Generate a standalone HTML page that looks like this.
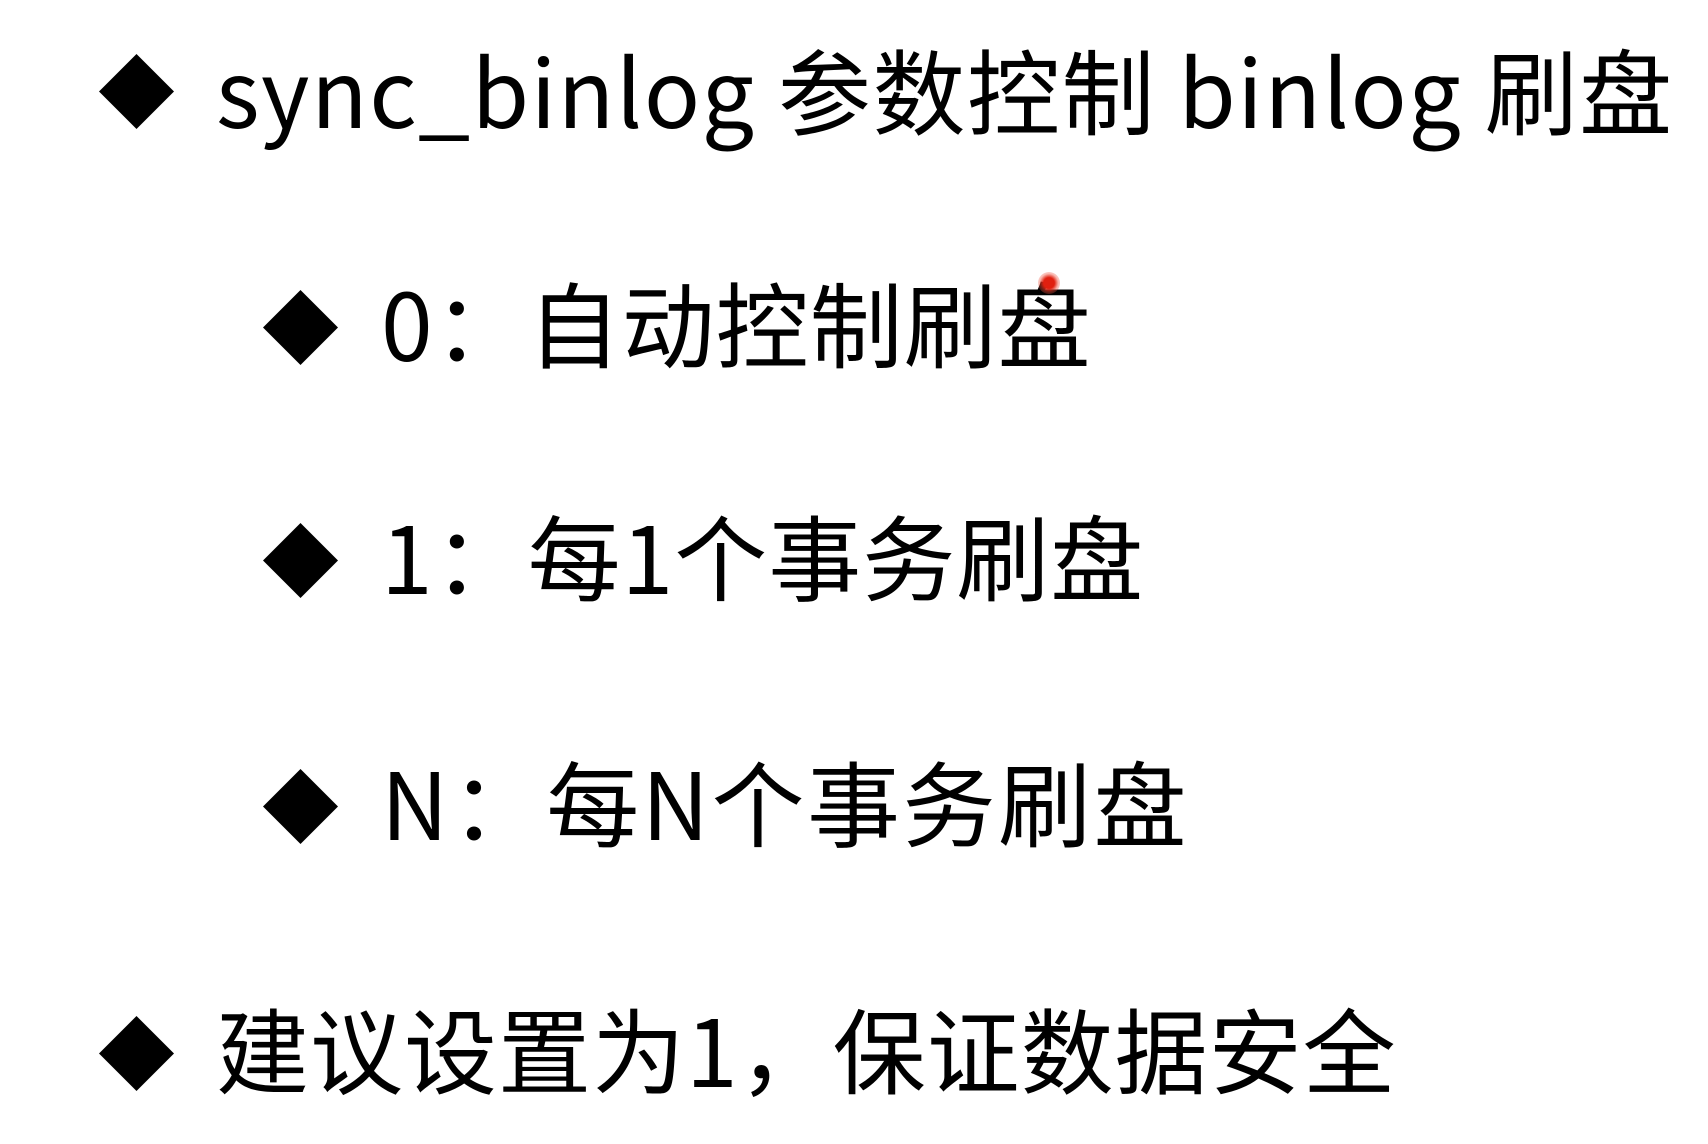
<!DOCTYPE html>
<html><head><meta charset="utf-8"><style>
html,body{margin:0;padding:0;background:#fff;}
body{width:1708px;height:1144px;position:relative;overflow:hidden;font-family:"Noto Sans CJK SC","Liberation Sans",sans-serif;color:#000;}
.l{position:absolute;font-size:93px;line-height:93px;white-space:nowrap;letter-spacing:1px;}
.d{position:absolute;width:75px;height:75px;}
</style></head><body>
<svg class="d" style="left:99px;top:54px" viewBox="0 0 75 75"><polygon points="37.5,0 75,37.5 37.5,75 0,37.5"/></svg>
<div class="l" style="left:216px;top:41px;letter-spacing:1.5px">sync_binlog 参数控制 binlog 刷盘</div>

<svg class="d" style="left:263px;top:290px" viewBox="0 0 75 75"><polygon points="37.5,0 75,37.5 37.5,75 0,37.5"/></svg>
<div class="l" style="left:381px;top:274px">0：自动控制刷盘</div>

<svg class="d" style="left:263px;top:523px" viewBox="0 0 75 75"><polygon points="37.5,0 75,37.5 37.5,75 0,37.5"/></svg>
<div class="l" style="left:381px;top:507px">1：每1个事务刷盘</div>

<svg class="d" style="left:263px;top:769px" viewBox="0 0 75 75"><polygon points="37.5,0 75,37.5 37.5,75 0,37.5"/></svg>
<div class="l" style="left:381px;top:753px;letter-spacing:2.5px">N：每N个事务刷盘</div>

<svg class="d" style="left:99px;top:1016px" viewBox="0 0 75 75"><polygon points="37.5,0 75,37.5 37.5,75 0,37.5"/></svg>
<div class="l" style="left:216px;top:1000px">建议设置为1，保证数据安全</div>

<div style="position:absolute;left:1038px;top:272px;width:22px;height:22px;border-radius:50%;background:radial-gradient(circle,#e02010 0 35%,rgba(240,80,60,.4) 60%,rgba(255,255,255,0) 100%);"></div>
</body></html>
